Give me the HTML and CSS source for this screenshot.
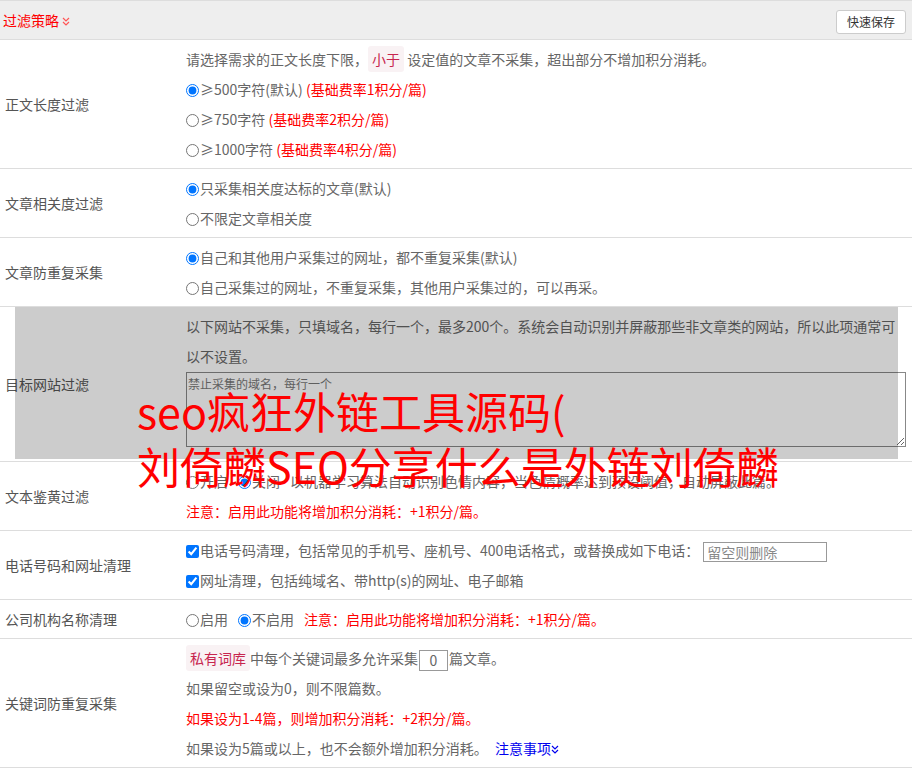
FILE: index.html
```html
<!DOCTYPE html>
<html lang="zh-CN">
<head>
    <meta charset="UTF-8">
    <meta name="viewport" content="width=device-width, initial-scale=1.0">
    <title>过滤策略</title>
    <link rel="stylesheet" href="styles.css">
</head>
<body>

    <div class="panel">
        <div class="panel-head">
            <span class="panel-title">过滤策略
                <svg class="chev" width="8" height="9" viewBox="0 0 8 9"><polyline points="1,1 4,4 7,1" /><polyline points="1,5 4,8 7,5" /></svg>
            </span>
            <button type="button" class="btn-save">快速保存</button>
        </div>

        <div class="row">
            <div class="label">正文长度过滤</div>
            <div class="field">
                <div class="line">请选择需求的正文长度下限，<span class="tag">小于</span> 设定值的文章不采集，超出部分不增加积分消耗。</div>
                <div class="line"><label><input type="radio" name="len" checked>≥500字符(默认)</label> <span class="red">(基础费率1积分/篇)</span></div>
                <div class="line"><label><input type="radio" name="len">≥750字符</label> <span class="red">(基础费率2积分/篇)</span></div>
                <div class="line"><label><input type="radio" name="len">≥1000字符</label> <span class="red">(基础费率4积分/篇)</span></div>
            </div>
        </div>

        <div class="row">
            <div class="label">文章相关度过滤</div>
            <div class="field">
                <div class="line"><label><input type="radio" name="rel" checked>只采集相关度达标的文章(默认)</label></div>
                <div class="line"><label><input type="radio" name="rel">不限定文章相关度</label></div>
            </div>
        </div>

        <div class="row">
            <div class="label">文章防重复采集</div>
            <div class="field">
                <div class="line"><label><input type="radio" name="dup" checked>自己和其他用户采集过的网址，都不重复采集(默认)</label></div>
                <div class="line"><label><input type="radio" name="dup">自己采集过的网址，不重复采集，其他用户采集过的，可以再采。</label></div>
            </div>
        </div>

        <div class="row row-site">
            <div class="label">目标网站过滤</div>
            <div class="field">
                <div class="line">以下网站不采集，只填域名，每行一个，最多200个。系统会自动识别并屏蔽那些非文章类的网站，所以此项通常可以不设置。</div>
                <textarea class="domains" placeholder="禁止采集的域名，每行一个"></textarea>
            </div>
            <div class="mask"></div>
        </div>

        <div class="row">
            <div class="label">文本鉴黄过滤</div>
            <div class="field">
                <div class="line"><label class="opt"><input type="radio" name="porn">开启</label><label class="opt"><input type="radio" name="porn" checked>关闭</label>以机器学习算法自动识别色情内容，当色情概率达到预设阈值，自动屏蔽此篇。</div>
                <div class="line red">注意：启用此功能将增加积分消耗：+1积分/篇。</div>
            </div>
        </div>

        <div class="row">
            <div class="label">电话号码和网址清理</div>
            <div class="field">
                <div class="line"><label><input type="checkbox" checked>电话号码清理，包括常见的手机号、座机号、400电话格式，或替换成如下电话：</label><input type="text" class="phone" placeholder="留空则删除"></div>
                <div class="line"><label><input type="checkbox" checked>网址清理，包括纯域名、带http(s)的网址、电子邮箱</label></div>
            </div>
        </div>

        <div class="row">
            <div class="label">公司机构名称清理</div>
            <div class="field">
                <div class="line"><label class="opt"><input type="radio" name="org">启用</label><label class="opt"><input type="radio" name="org" checked>不启用</label><span class="red">注意：启用此功能将增加积分消耗：+1积分/篇。</span></div>
            </div>
        </div>

        <div class="row">
            <div class="label">关键词防重复采集</div>
            <div class="field">
                <div class="line"><span class="tag">私有词库</span>中每个关键词最多允许采集<input type="text" class="count" value="0">篇文章。</div>
                <div class="line">如果留空或设为0，则不限篇数。</div>
                <div class="line red">如果设为1-4篇，则增加积分消耗：+2积分/篇。</div>
                <div class="line">如果设为5篇或以上，也不会额外增加积分消耗。 <a href="#" class="more">注意事项<svg class="chev" width="8" height="9" viewBox="0 0 8 9"><polyline points="1,1 4,4 7,1" /><polyline points="1,5 4,8 7,5" /></svg></a></div>
            </div>
        </div>
    </div>

    <div class="promo">seo疯狂外链工具源码(<br>刘倚麟SEO分享什么是外链刘倚麟</div>

</body>
</html>
```

FILE: styles.css
```css
html {
    overflow: hidden;
}
body {
    margin: 0;
    font-family: "Noto Sans CJK SC", "Microsoft YaHei", sans-serif;
    font-size: 14px;
    color: #666;
    background: #fff;
    position: relative;
}
.panel-head {
    display: flex;
    justify-content: space-between;
    align-items: center;
    height: 38px;
    background: #eee;
    border-top: 1px solid #ddd;
    border-bottom: 1px solid #ddd;
    padding: 0 6px 0 3px;
}
.panel-title {
    color: #f00;
    font-size: 14px;
}
.chev {
    fill: none;
    stroke: #f55;
    stroke-width: 1.2;
    vertical-align: 0;
}
.btn-save {
    width: 70px;
    height: 24px;
    margin-top: 3px;
    padding: 0;
    background: #fff;
    border: 1px solid #ccc;
    border-radius: 3px;
    font-family: inherit;
    font-size: 12px;
    color: #333;
}
.row {
    display: grid;
    grid-template-columns: 186px 1fr;
    border-bottom: 1px solid #ddd;
}
.label {
    display: flex;
    align-items: center;
    padding-left: 5px;
    color: #555;
}
.field {
    padding: 4px 6px 4px 0;
}
.line {
    line-height: 30px;
}
.red {
    color: #f00;
}
input[type="radio"],
input[type="checkbox"] {
    width: 13px;
    height: 13px;
    margin: 0 1px 0 0;
    vertical-align: -2px;
}
.opt {
    margin-right: 10px;
}
.tag {
    background: #f9f2f4;
    color: #c7254e;
    padding: 3px 4px;
    border-radius: 3px;
}
.row-site {
    position: relative;
}
.domains {
    display: block;
    box-sizing: border-box;
    width: 100%;
    height: 75px;
    margin: 1px 0 10px;
    padding: 2px 1px;
    border: 1px solid #888;
    font-family: inherit;
    font-size: 12px;
    resize: vertical;
}
.domains::placeholder {
    color: #777;
}
.mask {
    position: absolute;
    left: 15px;
    right: 14px;
    top: 0;
    bottom: 2px;
    background: rgba(0, 0, 0, 0.2);
}
.phone {
    box-sizing: border-box;
    width: 124px;
    height: 20px;
    margin-left: 4px;
    padding: 0 3px;
    border: 1px solid #999;
    font-family: inherit;
    font-size: 14px;
    vertical-align: middle;
}
.phone::placeholder {
    color: #888;
}
.count {
    box-sizing: border-box;
    width: 29px;
    height: 21px;
    margin: 0 1px;
    padding: 0;
    border: 1px solid #999;
    text-align: center;
    font-family: inherit;
    font-size: 14px;
    color: #666;
    vertical-align: middle;
}
.more {
    color: #00e;
    text-decoration: none;
    margin-left: 4px;
}
.more .chev {
    stroke: #00e;
}
.promo {
    position: absolute;
    left: 137px;
    top: 383px;
    font-size: 43px;
    line-height: 55px;
    color: #f00;
    white-space: nowrap;
}
```
